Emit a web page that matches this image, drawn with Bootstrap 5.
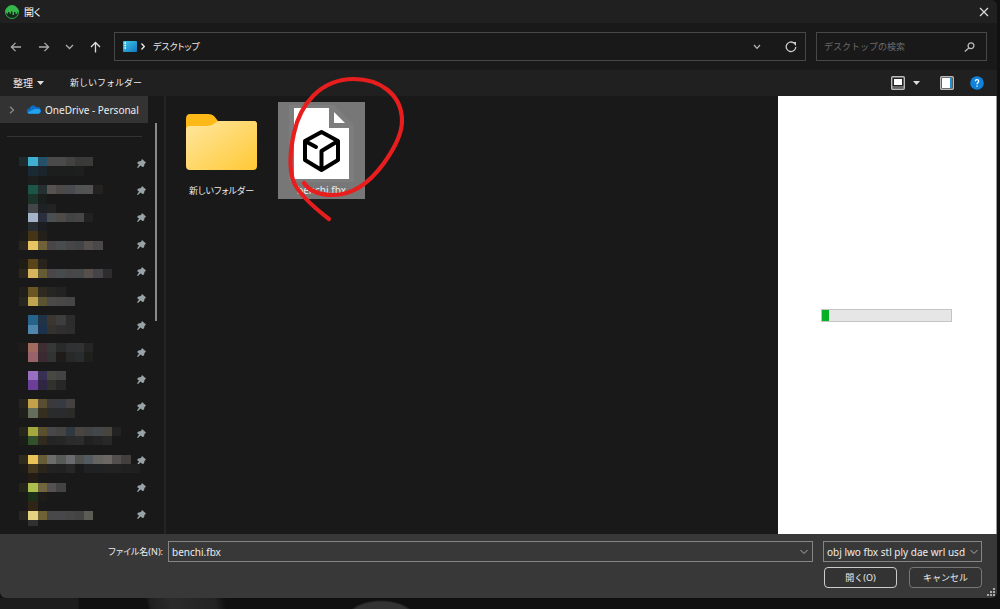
<!DOCTYPE html>
<html lang="ja" data-bs-theme="dark">
<head>
<meta charset="utf-8">
<meta name="viewport" content="width=device-width, initial-scale=1">
<title>開く</title>
<link href="https://cdn.jsdelivr.net/npm/bootstrap@5.3.0/dist/css/bootstrap.min.css" rel="stylesheet">
<style>
  :root { --ui: "Noto Sans", "Noto Sans CJK JP", sans-serif; }
  body { background: #111; color: #ececec; font: 10px/16px var(--ui); font-feature-settings: "palt"; }
  .kana { font-size: 9px; }
  svg { display: block; flex: none; }
  button, .plain { background: none; border: 0; padding: 0; color: inherit; }
  .dialog { flex: 1; margin-right: 3px; background: #191919; border-radius: 0 6px 6px 6px; overflow: hidden; min-height: 0; }
  .titlebar { background: #202020; height: 23px; padding: 0 8px 0 4px; }
  .titlebar h1 { font-size: 10px; line-height: 16px; font-weight: 400; }
  .navrow { height: 47px; padding: 0 10px 0 10px; }
  .arrows { width: 104px; padding-right: 13px; }
  .field { border: 1px solid #484848; height: 29px; }
  .search { flex: 0 0 171px; min-width: 0; margin-left: 10px; padding: 0 11px 0 7px; }
  .search input { min-width: 0; width: 0; flex: 1; outline: 0; }
  .search input::placeholder { color: #6c6c6c; opacity: 1; }
  .tools { background: #202020; height: 26px; padding: 0 13px; }
  .newdir { margin-left: 26px; }
  .side { flex: 0 0 166px; border-right: 2px solid #242424; position: relative; }
  .drive { width: 148px; height: 27px; background: #333; color: #ececec; padding-left: 9px; white-space: nowrap; }
  .rule { width: 135px; height: 1px; background: #333; margin: 13px 0 13px 7px; }
  .pins { width: 148px; padding-right: 2px; }
  .pins li { height: 27px; }
  .mosaic { position: absolute; left: 19px; top: 61px; }
  .thumb { position: absolute; right: 7px; top: 27px; width: 2px; height: 198px; background: #8a8a8a; }
  .files { flex: 1; padding: 6px 12px; gap: 13px; min-width: 0; }
  .tile { width: 87px; height: 97px; position: relative; }
  .tile.picked { background: #777; }
  .tile svg.stroke { position: absolute; left: 0; top: 0; overflow: visible; pointer-events: none; }
  .preview { flex: 0 0 22%; background: #fff; border-right: 1px solid #999; }
  .bar { width: 60%; height: 13px; background: #e6e6e6; border: 1px solid #c4c4c4; }
  .bar div { height: 100%; background: #06b025; }
  .foot { background: #383838; padding: 7px 15px 10px 0; }
  .foot label { width: 168px; padding-right: 5px; }
  .combo { border: 1px solid #858585; height: 21px; background: #383838; }
  .combo input { flex: 1; min-width: 0; outline: 0; padding-left: 3px; }
  .kinds { flex: 0 0 159px; margin-left: 10px; position: relative; }
  .kinds select { appearance: none; display: block; background: none; border: 0; color: inherit; width: 100%; height: 19px; padding: 0 16px 0 3px; overflow: hidden; outline: 0; }
  .kinds svg { position: absolute; right: 3px; top: 7px; pointer-events: none; }
  .act { width: 73px; height: 21px; border: 1px solid #777; border-radius: 4px; background: #333; }
  .act.main { border-color: #ccc; }
  .grip { position: absolute; right: 2px; bottom: 2px; }
  .behind { height: 11px; background: radial-gradient(ellipse 36px 20px at 381px 22px, #333 90%, transparent), linear-gradient(78deg, transparent 145px, #1f1f1f 148px, #2b2b2b 170px, #222 212px, transparent 222px), linear-gradient(90deg, #1c1c1c 78px, #101010 79px); }
</style>
</head>
<body>
<div class="d-flex flex-column vh-100">
<main class="dialog d-flex flex-column">
  <header class="titlebar d-flex align-items-center">
    <svg width="16" height="16" viewBox="0 0 16 16"><circle cx="8" cy="8" r="6.500" fill="#16281a" stroke="#2fae49"/><path d="M1.500 8A6.500 6.500 0 0 1 14.500 8L13 8.500V10H11.500V8H10V11H8.500V7.500H7V9.500H5.500V8H4V10L2.500 9Z" fill="#35b74c"/></svg>
    <h1 class="m-0 ms-1 flex-fill">開く</h1>
    <button aria-label="閉じる"><svg width="10" height="10" viewBox="0 0 10 10"><path d="M1 1l8 8M9 1L1 9" stroke="#ddd" stroke-width="1.200"/></svg></button>
  </header>

  <div class="navrow d-flex align-items-center">
    <div class="arrows d-flex align-items-center justify-content-between">
      <button aria-label="戻る"><svg width="12" height="12" viewBox="0 0 13 12" fill="none" stroke="#aaa" stroke-width="1.400"><path d="M12 6H2M6 1.500L1.500 6L6 10.500"/></svg></button>
      <button aria-label="進む"><svg width="12" height="12" viewBox="0 0 13 12" fill="none" stroke="#aaa" stroke-width="1.400"><path d="M1 6H11M7 1.500L11.500 6L7 10.500"/></svg></button>
      <button aria-label="履歴"><svg width="9" height="6" viewBox="0 0 9 6" fill="none" stroke="#aaa" stroke-width="1.300"><path d="M1 1L4.500 4.500L8 1"/></svg></button>
      <button aria-label="上へ"><svg width="11" height="12" viewBox="0 0 11 12" fill="none" stroke="#ddd" stroke-width="1.300"><path d="M5.500 11.500V2M1 6L5.500 1.500L10 6"/></svg></button>
    </div>
    <div class="field d-flex align-items-center flex-fill">
      <svg class="mx-2 me-1" width="14" height="11" viewBox="0 0 14 11"><defs><linearGradient id="dk" x2="1" y2="1"><stop stop-color="#3ec8e8"/><stop offset="1" stop-color="#1478c0"/></linearGradient></defs><rect width="14" height="11" rx="1" fill="url(#dk)"/><path d="M1.500 2h1.500M1.500 4.500h1.500M1.500 7h1.500" stroke="#fff" stroke-width="1.300"/></svg>
      <svg width="4" height="7" viewBox="0 0 4 7" fill="none" stroke="#eee" stroke-width="1.300"><path d="M.5 .5L3.300 3.500L.5 6.500"/></svg>
      <span class="kana ms-2 flex-fill">デスクトップ</span>
      <button class="me-4" aria-label="以前の場所"><svg width="8" height="6" viewBox="0 0 8 6" fill="none" stroke="#bbb" stroke-width="1.200"><path d="M1 1L4 4.300L7 1"/></svg></button>
      <button class="me-2" aria-label="最新の情報に更新"><svg width="12" height="12" viewBox="0 0 12 12"><path d="M8.500 1.700A4.800 4.800 0 1 0 10.800 6" fill="none" stroke="#ccc" stroke-width="1.300"/><path d="M7 1h4v4z" fill="#ccc"/></svg></button>
    </div>
    <div class="field search d-flex align-items-center">
      <input class="plain kana" type="search" placeholder="デスクトップの検索" aria-label="デスクトップの検索">
      <svg width="11" height="10" viewBox="0 0 11 10" fill="none" stroke="#bbb" stroke-width="1.300"><circle cx="7" cy="3.700" r="2.900"/><path d="M4.800 5.900L.8 9.500"/></svg>
    </div>
  </div>

  <div class="tools d-flex align-items-center">
    <button class="d-flex align-items-center gap-1">整理 <svg width="7" height="4" viewBox="0 0 7 4"><path d="M0 0h7L3.500 4z" fill="#ddd"/></svg></button>
    <button class="kana newdir">新しいフォルダー</button>
    <button class="ms-auto d-flex align-items-center" aria-label="表示"><svg width="14" height="14" viewBox="0 0 14 14"><rect x=".7" y=".7" width="12.600" height="12.600" rx="1" fill="#222" stroke="#bbb" stroke-width="1.400"/><path d="M3 3h8v6H3z" fill="#fff"/><path d="M1 11h12" stroke="#aaa"/></svg><svg class="ms-2" width="7" height="4" viewBox="0 0 7 4"><path d="M0 0h7L3.500 4z" fill="#ddd"/></svg></button>
    <button class="ms-3 ps-1" aria-label="プレビュー"><svg width="14" height="14" viewBox="0 0 14 14"><rect x=".7" y=".7" width="12.600" height="12.600" rx="1" fill="#222" stroke="#bbb" stroke-width="1.400"/><path d="M2 2h8v10H2z" fill="#fff"/><path d="M10 2h2v10h-2z" fill="#1f8fd8"/></svg></button>
    <button class="ms-3" aria-label="ヘルプ"><svg width="14" height="14" viewBox="0 0 14 14"><circle cx="7" cy="7" r="6.800" fill="#0f83dc"/><path d="M5.300 5.300Q5.400 3.700 7 3.700T8.700 5.200C8.700 6.400 7 6.500 7 8.200M7 9.500v1.300" fill="none" stroke="#fff" stroke-width="1.300"/></svg></button>
  </div>

  <div class="d-flex flex-fill" style="min-height:0">
    <nav class="side">
      <a href="#" class="drive d-flex align-items-center text-decoration-none">
        <svg width="6" height="8" viewBox="0 0 6 8" fill="none" stroke="#888" stroke-width="1.300"><path d="M1 .8L4.500 4L1 7.200"/></svg>
        <svg class="ms-2 me-1 ps-1" width="18" height="9" viewBox="0 0 14 9"><path d="M2.800 8.800A2.700 2.700 0 0 1 2.500 3.400A3.800 3.800 0 0 1 9.400 2.300A3.300 3.300 0 0 1 11.500 8.800Z" fill="#0a6fc8"/><path d="M2.500 8.800Q1 8.700.6 7.500L7.500 4L11.500 3.900A2.500 2.500 0 0 1 11.500 8.800Z" fill="#25a2ec"/></svg>
        <span>OneDrive - Personal</span>
      </a>
      <div class="rule"></div>
      <ul class="pins list-unstyled m-0" id="pins"></ul>
      <svg class="mosaic" id="mosaic" width="121" height="369" viewBox="0 0 13 39.650" preserveAspectRatio="none" shape-rendering="crispEdges" aria-hidden="true"></svg>
      <div class="thumb"></div>
    </nav>

    <section class="files d-flex align-items-start">
      <div class="tile d-flex flex-column align-items-center">
        <svg style="margin-top:11px" width="72" height="58" viewBox="0 0 72 58"><defs><linearGradient id="fd" x2="1" y2="1"><stop stop-color="#ffe7a0"/><stop offset="1" stop-color="#ffc935"/></linearGradient></defs><path d="M0 6Q0 1 4 1H22Q26 1 28 3L32 8H68Q71 8 71 12V30H0Z" fill="#fdb917"/><path d="M0 17Q0 13 4 13H22Q26 13 29 10Q31 8 34 8H68Q71 8 71 12V53Q71 57 67 57H4Q0 57 0 53Z" fill="url(#fd)"/></svg>
        <span class="kana mt-2 pt-1 text-nowrap">新しいフォルダー</span>
      </div>
      <div class="tile picked d-flex flex-column align-items-center">
        <svg style="margin-top:3px" width="66" height="77" viewBox="0 0 66 77"><path d="M0 0H45L65 20V77H0Z" fill="#7d7d7d"/><path d="M5 3H40V23H60V74H5Z" fill="#fff"/><path d="M45 7V18H56Z" fill="#fff"/><path d="M32.500 27L49 36V55L32.500 65L16 55V36ZM16 36L27 42M49 36L32.500 46V65" fill="none" stroke="#000" stroke-width="4" stroke-linejoin="round" stroke-linecap="round"/></svg>
        <span>benchi.fbx</span>
        <svg class="stroke" width="87" height="96" viewBox="0 0 87 96"><path d="M26 81C32 90 42 93 55 93C77 93 93 79 106 61C116 47 124 33 124 19C124-9 100-23 76-23C42-23 22 3 16 31C12 49 11 65 15 78C19 91 38 107 51 117" fill="none" stroke="#e81e1e" stroke-width="4.200" stroke-linecap="round"/></svg>
      </div>
    </section>

    <aside class="preview d-flex align-items-center justify-content-center">
      <div class="bar" role="progressbar" aria-label="読み込み中" aria-valuenow="5"><div style="width:5%"></div></div>
    </aside>
  </div>

  <form class="foot position-relative" onsubmit="return false">
    <div class="d-flex align-items-center">
      <label class="kana text-end" for="fname">ファイル名(N):</label>
      <div class="combo d-flex align-items-center flex-fill">
        <input class="plain" id="fname" value="benchi.fbx">
        <svg class="me-1" width="8" height="6" viewBox="0 0 8 6" fill="none" stroke="#aaa"><path d="M.5 1L4 4.500L7.500 1"/></svg>
      </div>
      <div class="combo kinds">
        <select aria-label="ファイルの種類"><option>obj lwo fbx stl ply dae wrl usd usdz</option></select>
        <svg width="8" height="6" viewBox="0 0 8 6" fill="none" stroke="#aaa"><path d="M.5 1L4 4.500L7.500 1"/></svg>
      </div>
    </div>
    <div class="d-flex justify-content-end" style="gap:12px;margin-top:5px">
      <button class="act main kana">開く(O)</button>
      <button class="act kana">キャンセル</button>
    </div>
    <svg class="grip" width="8" height="8" viewBox="0 0 8 8"><path d="M6 0h2v2H6zM3 3h2v2H3zM6 3h2v2H6zM0 6h2v2H0zM3 6h2v2H3zM6 6h2v2H6z" fill="#aaa"/></svg>
  </form>
</main>
<div class="behind"></div>
</div>
<script>
  // One pin per quick-access entry
  const pin = '<svg width="9" height="9" viewBox="0 0 9 9"><path d="M5 0L9 3.500L7.500 5L7 7.500L5.500 8L3.500 6.500L1 9L0 8.500L2 5.500L0 4L1.500 2.500L4 2Z" fill="#98a3a8"/></svg>';
  document.getElementById('pins').innerHTML = ('<li class="d-flex align-items-center justify-content-end">' + pin + '</li>').repeat(14);
  // Censoring mosaic: row number, first column, cell colours
  const rows = [
    [0,0,'1f2a2c 40b0d0 24506a 4a4a4a 4a4a4a 434241 383a39 3a3b39'],
    [1,1,'192a35 1b242a 1c1d1d 1c1d1d 1c1d1d 1c1f1e'],[2,1,'1b1e1c'],
    [3,1,'1d5548 242f30 575350 4b4a49 494950 515352 525352 232221'],[4,1,'1b3329 1a1e1c'],
    [5,1,'424549 202124 222222'],[6,1,'a4b3c9 2b2f3d 4a4f52 4d4a47 424344 474546 212121'],[7,1,'262c32 1b1d21'],
    [8,0,'1d1b18 433515 231f19'],[9,0,'2c2820 e8c463 6f623a 4a4647 484c4f 474646 404445 554f4d 4a4849'],
    [11,0,'201d17 59451a 28231b'],[12,0,'2c281e d7b55f 655b35 4b4748 484b4e 484747 444848 564f4c 454347 2e2d2d'],
    [14,0,'201f1b 695624 2e2a20 252524 222222'],[15,0,'272520 c0a452 5b5431 4a4a48 4a4847 464646'],
    [17,1,'26628a 1f3345 3b3630 3d3d3d 2c2c2c'],[18,1,'5086ab 1c324c 34322f 2f2f2f 2d2d2d'],
    [20,0,'1f1c1b a26b60 3f2e31 353836 292b2b 303132 313232 242524'],[21,1,'986469 3a2930 313432 1e1b1a 272828 2a2d2d 1f1f1e'],
    [23,1,'986ec0 383053 484842 434343'],[24,1,'6b3e99 2e2643 31312d 272727'],
    [26,0,'29251e c3a24b 594e31 3b393a 363a41 454140'],[27,0,'1f1f1c 636e5d 362f1f 2a2b2b 2a2b2c 2a2a29'],
    [29,0,'27261d a4a840 5a502d 484749 454442 303840 4b4542 434343 43474a 48443e 222222'],
    [30,0,'1a1e19 31502b 302b1e 242424 252626 2b2b2b 2c2c2c 202020 232424 282828'],
    [32,0,'2f2a1e e9c358 665c37 6d6d6b 585a57 6a6b6e 50524f 525b60 666461 6b6765 51504e 423f3c'],
    [33,0,'1d1b18 42361e 2a251b 222222 212121 272727 1a1a1a 202122 202122 222222 222222 202020 1f1f1f'],[34,1,'241d15'],
    [35,0,'24261b acbf4e 70653c 555051 444344'],[36,1,'1b3018 1e1c18'],[37,1,'2f2516'],
    [38,0,'2a2721 e4d382 6f6235 484849 48484a 464647 434343 5b5c55'],[39,1,'303030']
  ];
  document.getElementById('mosaic').innerHTML = rows.map(([r, c, s]) => s.split(' ').map((k, i) =>
    `<rect x="${c + i}" y="${r}" width="1" height="1" fill="#${k}"/>`).join('')).join('');
</script>
<script src="https://cdn.jsdelivr.net/npm/bootstrap@5.3.0/dist/js/bootstrap.bundle.min.js"></script>
</body>
</html>
